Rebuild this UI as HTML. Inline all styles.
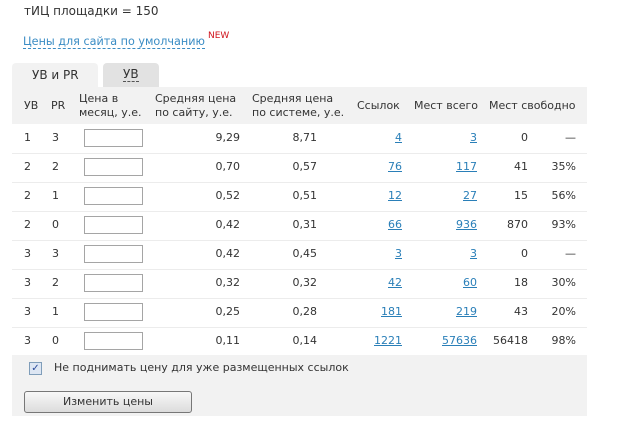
<!DOCTYPE html>
<html><head><meta charset="utf-8"><style>
*{margin:0;padding:0;box-sizing:border-box}
body{width:619px;height:427px;background:#fff;font-family:"DejaVu Sans","Liberation Sans",sans-serif;font-size:11px;color:#333;position:relative;overflow:hidden}
.a{position:absolute;white-space:nowrap}
.r{text-align:right}
a{color:#2a7fb8;text-decoration:underline}
.inp{position:absolute;width:59px;height:18px;border:1px solid #a5a5a5;background:#fff}
.sep{position:absolute;left:12px;width:575px;height:1px;background:#ececec}
</style></head><body>
<div class="a" style="left:24px;top:4px;font-size:12px;color:#333">тИЦ площадки = 150</div>
<div class="a" style="left:23px;top:35px;font-size:11.2px;color:#3a8cc4;border-bottom:1px dashed #3a8cc4;line-height:13px">Цены для сайта по умолчанию</div>
<div class="a" style="left:208px;top:31px;font-size:9px;color:#d0141c">NEW</div>
<div class="a" style="left:12px;top:63px;width:86px;height:24px;background:#f2f2f2;border-radius:4px 4px 0 0"></div>
<div class="a" style="left:32px;top:68px;font-size:12px">УВ и PR</div>
<div class="a" style="left:103px;top:63px;width:56px;height:24px;background:#e2e2e2;border-radius:4px 4px 0 0"></div>
<div class="a" style="left:123px;top:68px;font-size:12px;border-bottom:1px dashed #555;line-height:13px">УВ</div>
<div class="a" style="left:12px;top:87px;width:575px;height:37px;background:#f2f2f2"></div>
<div class="a" style="left:12px;top:355px;width:575px;height:61px;background:#f2f2f2"></div>
<div class="a" style="left:24px;top:99px">УВ</div>
<div class="a" style="left:51px;top:99px">PR</div>
<div class="a" style="left:79px;top:92px;line-height:14px">Цена в<br>месяц, у.е.</div>
<div class="a" style="left:155px;top:92px;line-height:14px">Средняя цена<br>по сайту, у.е.</div>
<div class="a" style="left:252px;top:92px;line-height:14px">Средняя цена<br>по системе, у.е.</div>
<div class="a" style="left:357px;top:99px">Ссылок</div>
<div class="a" style="left:414px;top:99px">Мест всего</div>
<div class="a" style="left:489px;top:99px">Мест свободно</div>
<div id="rows"></div>
<script>
var d=[[1,3,"9,29","8,71",4,3,0,"—"],[2,2,"0,70","0,57",76,117,41,"35%"],[2,1,"0,52","0,51",12,27,15,"56%"],[2,0,"0,42","0,31",66,936,870,"93%"],[3,3,"0,42","0,45",3,3,0,"—"],[3,2,"0,32","0,32",42,60,18,"30%"],[3,1,"0,25","0,28",181,219,43,"20%"],[3,0,"0,11","0,14",1221,57636,56418,"98%"]];
var h="";
d.forEach(function(r,i){var y=131+i*29;
h+='<div class="a" style="left:24px;top:'+y+'px">'+r[0]+'</div>';
h+='<div class="a" style="left:52px;top:'+y+'px">'+r[1]+'</div>';
h+='<div class="inp" style="left:84px;top:'+(y-2)+'px"></div>';
h+='<div class="a r" style="right:379px;top:'+y+'px">'+r[2]+'</div>';
h+='<div class="a r" style="right:302px;top:'+y+'px">'+r[3]+'</div>';
h+='<div class="a r" style="right:217px;top:'+y+'px"><a>'+r[4]+'</a></div>';
h+='<div class="a r" style="right:142px;top:'+y+'px"><a>'+r[5]+'</a></div>';
h+='<div class="a r" style="right:91px;top:'+y+'px">'+r[6]+'</div>';
h+='<div class="a r" style="right:43px;top:'+y+'px">'+r[7]+'</div>';
if(i<7)h+='<div class="sep" style="top:'+(153+i*29)+'px"></div>';
});
document.getElementById("rows").innerHTML=h;
</script>
<div class="a" style="left:29px;top:362px;width:13px;height:13px;border:1px solid #7f9db9;background:#dde6f3;color:#2a4a9a;font-size:10px;line-height:11px;text-align:center">✓</div>
<div class="a" style="left:54px;top:361px">Не поднимать цену для уже размещенных ссылок</div>
<div class="a" style="left:24px;top:391px;width:168px;height:22px;border:1px solid #777;border-radius:3px;background:linear-gradient(#f8f8f8,#dcdcdc);text-align:center;line-height:20px">Изменить цены</div>
</body></html>
